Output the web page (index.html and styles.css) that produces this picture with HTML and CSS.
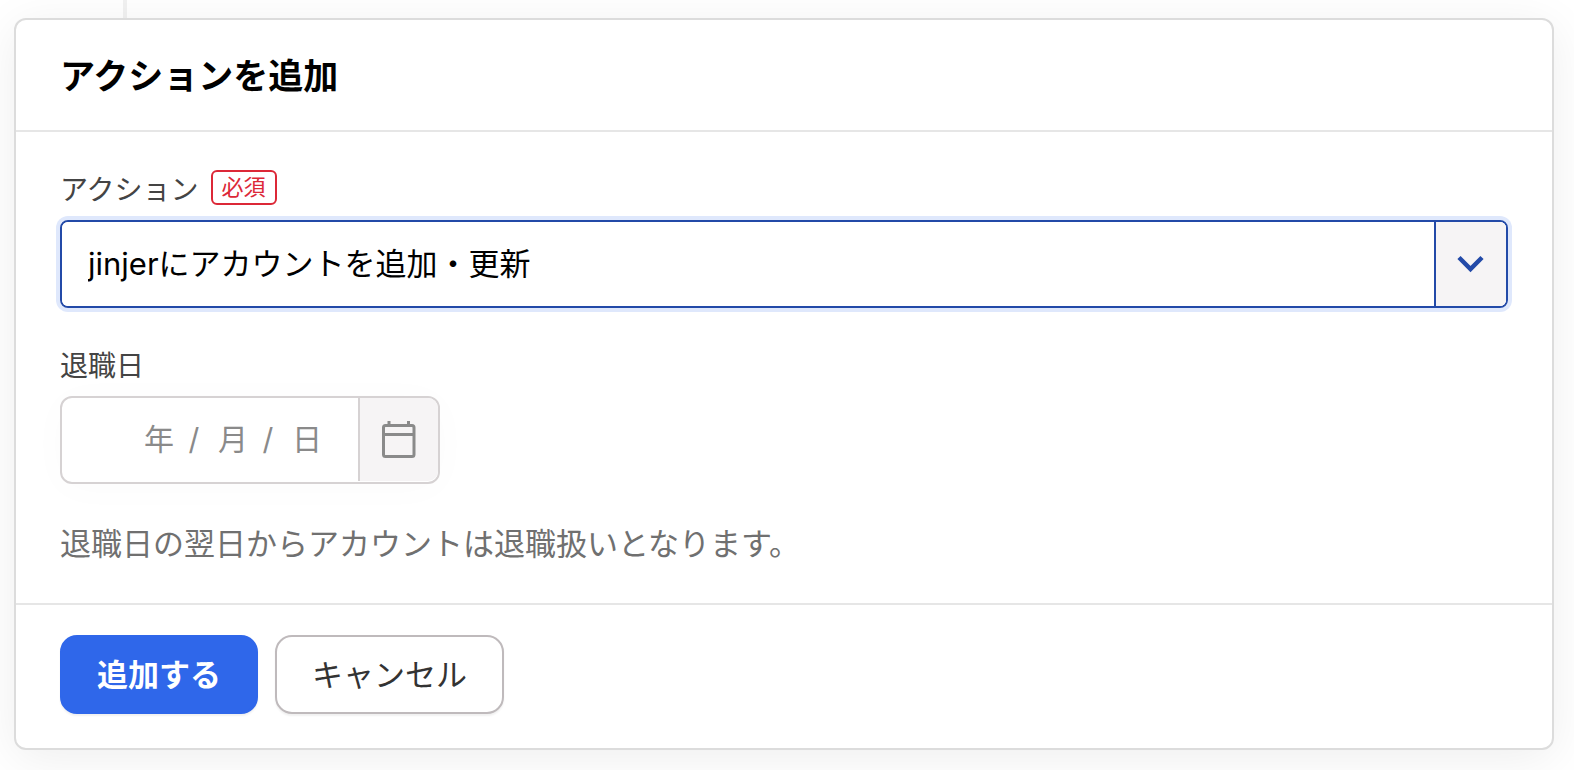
FILE: index.html
```html
<!DOCTYPE html>
<html lang="ja">
<head>
<meta charset="utf-8">
<meta name="viewport" content="width=device-width, initial-scale=1">
<title>アクションを追加</title>
<link rel="stylesheet" href="styles.css">
</head>
<body>
<main class="page">
  <form class="card">
    <header class="card-header">
      <h1 class="card-title">アクションを追加</h1>
    </header>
    <div class="card-body">
      <div class="field">
        <div class="field-head">
          <label class="label" for="action">アクション</label>
          <span class="badge">必須</span>
        </div>
        <div class="select-box">
          <select class="select" id="action">
            <option>jinjerにアカウントを追加・更新</option>
          </select>
          <span class="select-arrow">
            <svg width="28" height="18" viewBox="0 0 28 18" fill="none" stroke="currentColor" stroke-width="4.500" aria-hidden="true"><path d="M2 2.500 13.500 14 25 2.500"/></svg>
          </span>
        </div>
      </div>
      <div class="field">
        <label class="label" for="year">退職日</label>
        <div class="date-box">
          <div class="date-parts">
            <input class="date-part date-year" id="year" type="text" placeholder="年" aria-label="年">
            <span class="slash">/</span>
            <input class="date-part" type="text" placeholder="月" aria-label="月">
            <span class="slash">/</span>
            <input class="date-part" type="text" placeholder="日" aria-label="日">
          </div>
          <button class="date-button" type="button" aria-label="カレンダー">
            <svg width="34" height="38" viewBox="0 0 34 38" fill="none" stroke="currentColor" stroke-width="3" aria-hidden="true"><rect x="1.5" y="4.500" width="30.500" height="31" rx="2"/><path d="M2 13.500H32M7 0V4M26.500 0V4"/></svg>
          </button>
        </div>
      </div>
      <p class="help">退職日の翌日からアカウントは退職扱いとなります。</p>
    </div>
    <footer class="card-footer">
      <button class="button button-primary" type="submit">追加する</button>
      <button class="button button-plain" type="button">キャンセル</button>
    </footer>
  </form>
</main>
</body>
</html>
```
FILE: styles.css
```css
* {
  box-sizing: border-box;
}

body {
  margin: 0;
  background: #fff;
  color: #000;
  font-family: Inter, "Noto Sans CJK JP", sans-serif;
  font-size: 31px;
  line-height: 44px;
}

.page {
  position: relative;
  overflow: hidden;
  padding: 18px 20px 20px 14px;
}

/* Connector line that runs into the card from above */
.page::before {
  content: "";
  position: absolute;
  top: 0;
  left: 123px;
  width: 4px;
  height: 18px;
  background: #f1f1f1;
}

.card {
  position: relative;
  border: 2px solid #dcdcdc;
  border-radius: 12px;
  background: #fff;
  background-clip: padding-box;
  box-shadow: 0 8px 48px rgba(0, 0, 0, 0.07);
}

.card-header {
  padding: 32px 44px 30px;
  border-bottom: 2px solid #e6e6e6;
}

.card-title {
  margin: 0;
  font-size: 35px;
  font-weight: 700;
  line-height: 48px;
}

.card-body {
  display: flex;
  flex-direction: column;
  gap: 38px;
  padding: 38px 44px 37px;
}

.field {
  display: flex;
  flex-direction: column;
  gap: 10px;
}

.field-head {
  display: flex;
  align-items: flex-start;
  gap: 12px;
}

.label {
  color: #444;
  font-size: 28px;
  line-height: 40px;
}

.badge {
  padding: 0 9px;
  border: 2px solid #dc2837;
  border-radius: 6px;
  color: #dc2837;
  font-size: 22px;
  line-height: 31px;
}

.select-box {
  display: flex;
  position: relative;
  height: 88px;
  border: 2px solid #234aa8;
  border-radius: 8px;
  box-shadow: 0 0 0 4px #dfe8fc;
}

.select {
  flex: 1;
  min-width: 0;
  padding: 0 98px 0 26px;
  border: 0;
  border-radius: 6px;
  outline: 0;
  appearance: none;
  background: #fff;
  color: #000;
  font: inherit;
}

.select-arrow {
  display: flex;
  position: absolute;
  top: 0;
  right: 0;
  bottom: 0;
  align-items: center;
  justify-content: center;
  width: 72px;
  border-left: 2px solid #234aa8;
  border-radius: 0 6px 6px 0;
  background: #f6f4f5;
  color: #234aa8;
  pointer-events: none;
}

.date-box {
  display: flex;
  align-self: flex-start;
  height: 88px;
  border: 2px solid #d6d2d3;
  border-radius: 12px;
  background: #fff;
  box-shadow: 0 4px 40px rgba(0, 0, 0, 0.02);
}

.date-parts {
  display: flex;
  align-items: center;
  width: 296px;
  padding: 0 36px 2px 20px;
  color: #8a8a8a;
}

.date-part {
  width: 34px;
  height: 48px;
  padding: 0;
  border: 0;
  outline: 0;
  background: transparent;
  color: #444;
  font: inherit;
  font-size: 30px;
  text-align: right;
}

.date-year {
  flex: 1;
  min-width: 0;
}

.date-part::placeholder {
  color: #8a8a8a;
  opacity: 1;
}

.slash {
  width: 40px;
  font-size: 30px;
  text-align: center;
}

.date-button {
  display: flex;
  align-items: center;
  justify-content: center;
  width: 80px;
  margin-bottom: 1px;
  padding: 0;
  border: 0;
  border-left: 2px solid #d6d2d3;
  border-radius: 0 10px 10px 0;
  background: #f6f4f5;
  color: #8a8a8a;
}

.help {
  margin: 0;
  color: #707070;
}

.card-footer {
  display: flex;
  gap: 17px;
  padding: 30px 44px 34px;
  border-top: 2px solid #e6e6e6;
}

.button {
  height: 79px;
  padding: 0 35px;
  border: 2px solid #bfbabc;
  border-radius: 17px;
  background: #fff;
  color: #333;
  font: inherit;
  box-shadow: 0 2px 2px rgba(0, 0, 0, 0.06);
}

.button-primary {
  border-color: #2f67ea;
  background: #2f67ea;
  color: #fff;
  font-weight: 700;
}
```
